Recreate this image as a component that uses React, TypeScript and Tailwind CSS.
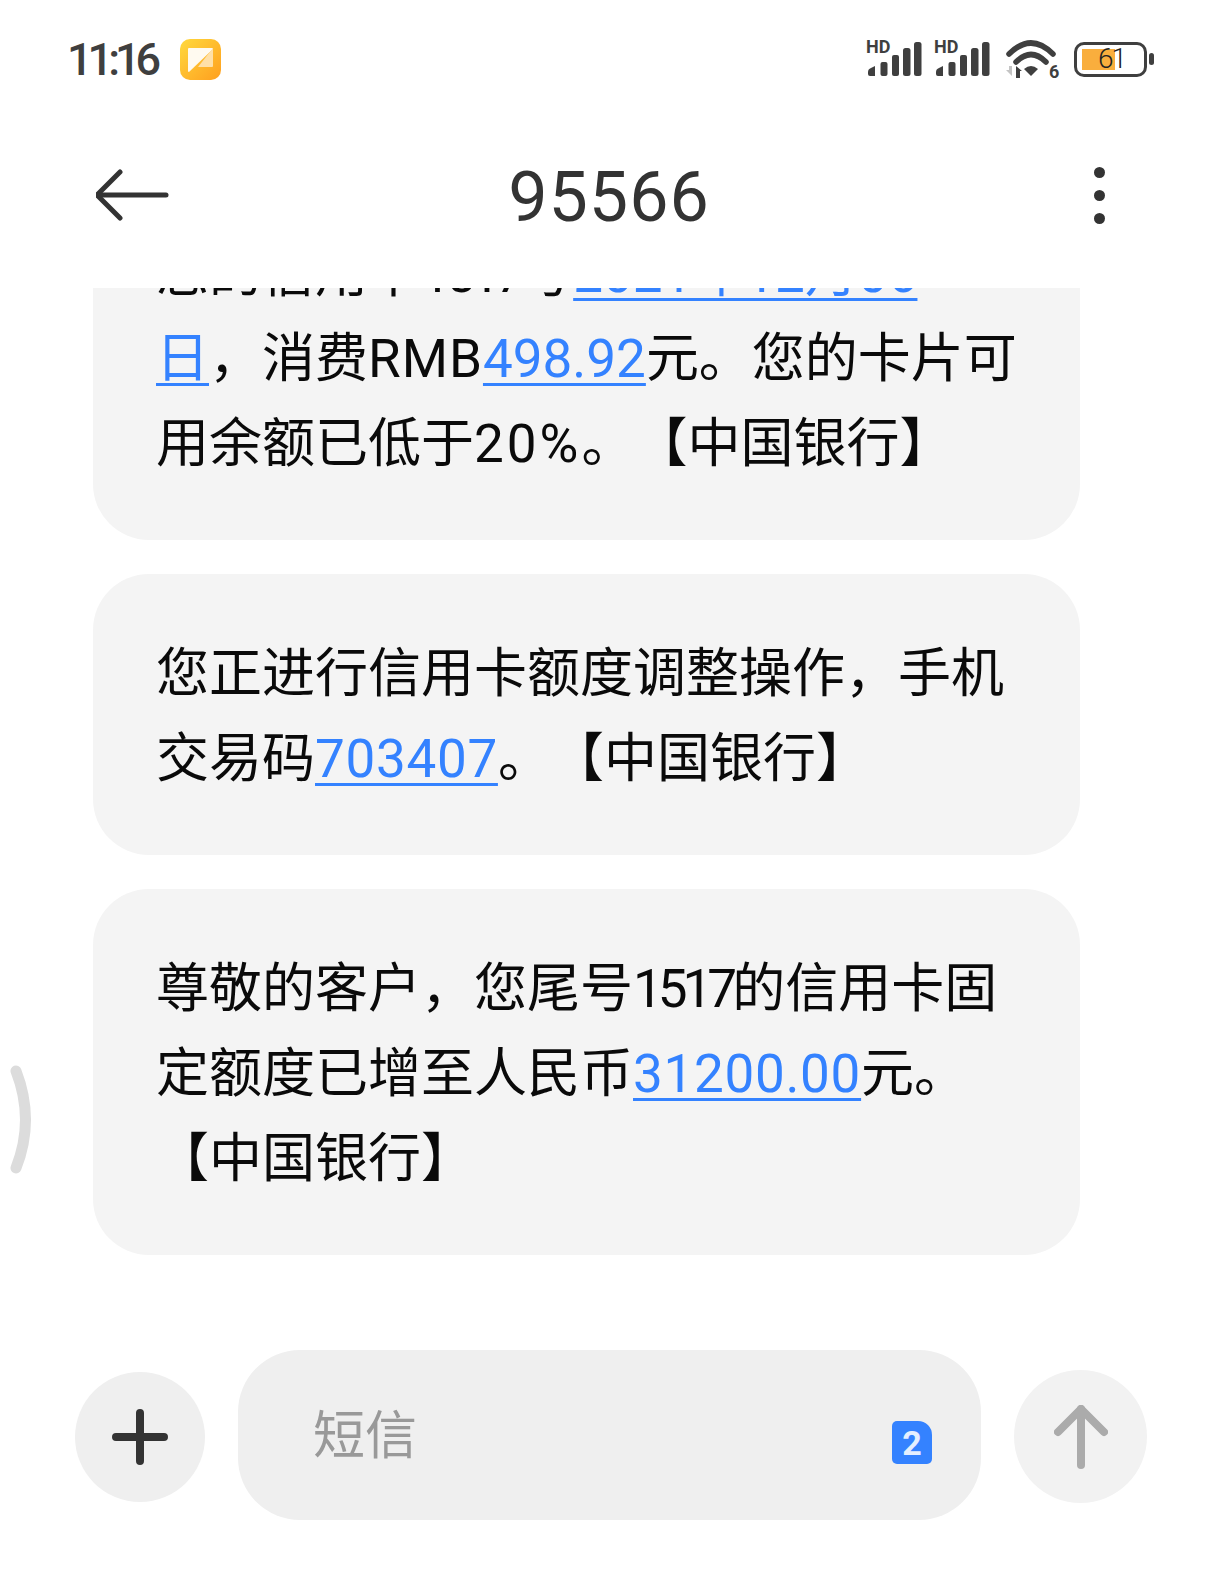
const FONT = "font-['Roboto','Noto_Sans_CJK_SC',sans-serif]";

function Link({ children, wide }: { children: string; wide?: boolean }) {
  return (
    <span className={`text-[#3482ff] underline decoration-[3px] underline-offset-[6px] ${wide ? "tracking-[0.7px]" : ""}`}>
      {children}
    </span>
  );
}

function Bubble({ lines }: { lines: React.ReactNode[] }) {
  return (
    <div className="shrink-0 w-[987px] ml-[93px] bg-[#f4f4f4] rounded-[56px] pl-[63px] pt-[58px] pb-[53px] text-[53px] leading-[85px] text-[#0a0a0a] whitespace-nowrap [text-spacing-trim:space-all]">
      {lines.map((line, i) => (
        <div key={i}>{line}</div>
      ))}
    </div>
  );
}

function Signal() {
  return (
    <svg width="62" height="46" viewBox="862 36 62 46" fill="#3f3f3f">
      <text x="866" y="53" fontSize="18" fontWeight="700" fontFamily="Roboto, sans-serif">HD</text>
      <path d="M868 72 q0 -3 3 -4 l4 -2 v10 h-5 q-2 0 -2 -2z" />
      <rect x="880.5" y="62" width="7" height="14" rx="2" />
      <rect x="892" y="55" width="7" height="21" rx="2" />
      <rect x="903" y="48" width="7.5" height="28" rx="2.5" />
      <rect x="914" y="42" width="7.5" height="34" rx="2.5" />
    </svg>
  );
}

function Wifi() {
  return (
    <svg width="58" height="48" viewBox="1002 36 58 48" fill="none" className="ml-[11px] mr-[13px]">
      <path d="M1008 55 Q1030 33 1052 55" stroke="#3f3f3f" strokeWidth="5.5" strokeLinecap="round" />
      <path d="M1015 63 Q1030 48 1045 63" stroke="#3f3f3f" strokeWidth="5.5" strokeLinecap="round" />
      <path d="M1023 70 Q1030 64 1037 70 L1030 77z" fill="#3f3f3f" />
      <path d="M1005 71 h3 v-4 h3 v10z" fill="#c4c4c4" />
      <path d="M1015 79 v-12 l6 5 h-2 v7z" fill="#3f3f3f" />
      <text x="1048" y="79" fontSize="18" fontWeight="700" fill="#3f3f3f" fontFamily="Roboto, sans-serif">6</text>
    </svg>
  );
}

function Battery() {
  return (
    <div className="flex items-center gap-[2px]">
      <div className="relative w-[73px] h-[35px] rounded-[10px] border-[3px] border-[#3f3f3f] p-[4px]">
        <div className="h-full w-[33px] ml-[1px] bg-[#f9ae3d]" />
        <span className="absolute inset-0 left-[21px] flex items-center text-[28px] leading-none tracking-[-2px] font-light text-[#222]">
          61
        </span>
      </div>
      <div className="w-[5px] h-[12px] rounded-full bg-[#3f3f3f]" />
    </div>
  );
}

function NoteIcon() {
  return (
    <svg width="41" height="41" viewBox="0 0 41 41" className="ml-[24px]">
      <defs>
        <linearGradient id="noteBg" x1="0" y1="0" x2="1" y2="1">
          <stop offset="0" stopColor="#ffd93d" />
          <stop offset="1" stopColor="#ff9f1f" />
        </linearGradient>
      </defs>
      <rect width="41" height="41" rx="10" fill="url(#noteBg)" />
      <path d="M8 10 q0 -1 1 -1 h23 q1 0 1 1 v0 L9 33 q-1 0 -1 -1z" fill="#fffaf0" />
      <path d="M33 9 v18 q0 1 -1 1 h-14z" fill="#ffe0a8" />
    </svg>
  );
}

export default function App() {
  return (
    <div className={`relative w-[1219px] h-[1571px] bg-white flex flex-col overflow-hidden ${FONT}`}>
      {/* Status bar */}
      <div className="shrink-0 h-[118px] pl-[67px] pr-[65px] flex items-center justify-between">
        <div className="flex items-center">
          <span className="text-[45px] leading-none font-medium tracking-[-5px] text-[#3f3f3f]">11:16</span>
          <NoteIcon />
        </div>
        <div className="flex items-center">
          <Signal />
          <div className="w-[6px]" />
          <Signal />
          <Wifi />
          <Battery />
        </div>
      </div>

      {/* Header */}
      <div className="shrink-0 h-[154px] mb-[16px] pl-[96px] pr-[114px] flex items-center justify-between">
        <svg width="74" height="52" viewBox="2 0 74 52" fill="none" stroke="#333" strokeWidth="5" strokeLinecap="round" strokeLinejoin="round">
          <path d="M26 3 L3 26 L26 49" />
          <path d="M3 26 H72" />
        </svg>
        <span className="text-[70px] leading-none tracking-[1px] text-[#333] ml-[-46px] mt-[3px]">95566</span>
        <div className="flex flex-col gap-[12px]">
          <div className="w-[11px] h-[11px] rounded-full bg-[#333]" />
          <div className="w-[11px] h-[11px] rounded-full bg-[#333]" />
          <div className="w-[11px] h-[11px] rounded-full bg-[#333]" />
        </div>
      </div>

      {/* Messages */}
      <div className="flex-1 min-h-0 overflow-hidden flex flex-col justify-end gap-[34px] pb-[95px]">
        <Bubble
          lines={[
            <>您的信用卡<span className="tracking-[-5px]">1517</span>号<Link>2021年12月06</Link></>,
            <><Link>日</Link>，消费<span className="tracking-[1px]">RMB</span><Link>498.92</Link>元。您的卡片可</>,
            <>用余额已低于<span className="tracking-[3px]">20%</span>。【中国银行】</>,
          ]}
        />
        <Bubble
          lines={[
            <>您正进行信用卡额度调整操作，手机</>,
            <>交易码<Link wide>703407</Link>。【中国银行】</>,
          ]}
        />
        <Bubble
          lines={[
            <>尊敬的客户，您尾号<span className="tracking-[-5px]">1517</span>的信用卡固</>,
            <>定额度已增至人民币<Link wide>31200.00</Link>元。</>,
            <>【中国银行】</>,
          ]}
        />
      </div>

      {/* Composer */}
      <div className="shrink-0 pl-[75px] pr-[72px] pb-[51px] flex items-center gap-[33px]">
        <button className="shrink-0 mt-[3px] w-[130px] h-[130px] rounded-full bg-[#efefef] flex items-center justify-center">
          <svg width="56" height="56" viewBox="0 0 56 56" stroke="#333" strokeWidth="8" strokeLinecap="round">
            <path d="M28 4 V52 M4 28 H52" />
          </svg>
        </button>
        <div className="flex-1 h-[170px] rounded-[62px] bg-[#efefef] pl-[75px] pr-[49px] flex items-center justify-between">
          <span className="mt-[4px] text-[52px] leading-none text-[#999]">短信</span>
          <div className="w-[40px] h-[43px] mt-[15px] bg-[#3482ff] rounded-[5px] rounded-tr-[14px] flex items-center justify-center text-[34px] leading-none font-bold text-[#e4efff]">
            2
          </div>
        </div>
        <button className="shrink-0 mt-[3px] w-[133px] h-[133px] rounded-full bg-[#f2f2f2] flex items-center justify-center">
          <svg width="54" height="64" viewBox="0 0 54 64" fill="none" stroke="#ababab" strokeWidth="8" strokeLinecap="round" strokeLinejoin="round">
            <path d="M4 27 L27 4 L50 27" />
            <path d="M27 4 V60" />
          </svg>
        </button>
      </div>

      {/* Side gesture handle */}
      <svg className="absolute left-[8px] top-[1063px]" width="26" height="114" viewBox="0 0 26 114" fill="none">
        <path d="M8 8 Q27 57 8 105" stroke="#dcdcdc" strokeWidth="11" strokeLinecap="round" />
      </svg>
    </div>
  );
}
